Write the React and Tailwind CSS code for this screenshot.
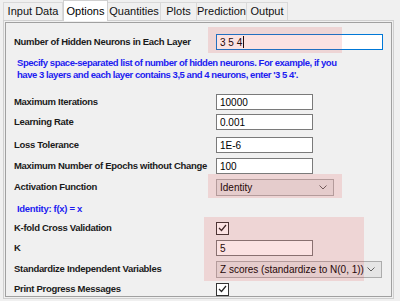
import React from "react";

const tabs = [
  { name: "Input Data", w: 60 },
  { name: "Options", w: 45, active: true },
  { name: "Quantities", w: 53 },
  { name: "Plots", w: 36 },
  { name: "Prediction", w: 50 },
  { name: "Output", w: 41 },
];

const TextBox = ({ value, focused, caret }) => (
  <div
    className={`h-[16px] bg-white border flex items-center px-[3px] text-[10px] font-normal text-black ${
      focused ? "border-[#0078d7] w-[167px]" : "border-[#7a7a7a] w-[97px]"
    }`}
  >
    {value}
    {caret && <span className="inline-block w-px h-[12px] bg-black ml-px"></span>}
  </div>
);

const Select = ({ value, width }) => (
  <div
    className={`h-[17px] bg-[#e5e5e5] border border-[#acacac] flex items-center justify-between pl-[3px] pr-[6px] text-[10px] font-normal text-black ${width}`}
  >
    <span>{value}</span>
    <svg width="8" height="5" viewBox="0 0 8 5">
      <path d="M0.5 0.5 L4 4 L7.5 0.5" fill="none" stroke="#606060" strokeWidth="1" />
    </svg>
  </div>
);

const Check = () => (
  <div className="w-[13px] h-[13px] bg-white border border-[#333] flex items-center justify-center">
    <svg width="9" height="8" viewBox="0 0 9 8">
      <path d="M1 4 L3.5 6.5 L8 1" fill="none" stroke="#222" strokeWidth="1.2" />
    </svg>
  </div>
);

const Row = ({ label, mt, h = "h-[16px]", children }) => (
  <div className={`flex items-center ${h} ${mt}`}>
    <div className="w-[202px] shrink-0 font-bold text-[9.5px] tracking-[-0.3px] text-[#1a1a1a] whitespace-nowrap">
      {label}
    </div>
    {children}
  </div>
);

export default function App() {
  return (
    <div
      className="relative w-[400px] h-[301px] bg-[#f0f0f0] overflow-hidden"
      style={{ fontFamily: '"Liberation Sans", Arial, sans-serif' }}
    >
      {/* tab strip */}
      <div className="flex items-end h-[21px] pl-[3px] relative z-10">
        {tabs.map((t) =>
          t.active ? (
            <div
              key={t.name}
              className="h-[21px] bg-white border border-b-0 border-[#d0d0d0] flex items-center justify-center text-[11px] text-black"
              style={{ width: t.w }}
            >
              {t.name}
            </div>
          ) : (
            <div
              key={t.name}
              className="h-[18px] mb-[1px] border border-b-0 border-l-0 first:border-l border-[#d9d9d9] flex items-center justify-center text-[11px] text-[#111]"
              style={{ width: t.w }}
            >
              {t.name}
            </div>
          )
        )}
      </div>

      {/* panel */}
      <div className="absolute left-[3px] top-[20px] w-[391px] h-[279px] border border-[#d0d0d0] bg-[#f0f0f0]">
        <div className="m-[1px] h-[275px] border border-[#a0a0a0] pl-[8px] pt-[11px]">
          <Row label="Number of Hidden Neurons in Each Layer">
            <TextBox value="3 5 4" focused caret />
          </Row>

          <div className="mt-[7px] pl-[3px] text-[9.5px] tracking-[-0.45px] leading-[12px] font-bold text-[#1c1cf0] whitespace-nowrap">
            <div>Specify space-separated list of number of hidden neurons. For example, if you</div>
            <div>have 3 layers and each layer contains 3,5 and 4 neurons, enter '3 5 4'.</div>
          </div>

          <Row label="Maximum Iterations" mt="mt-[13px]">
            <TextBox value="10000" />
          </Row>
          <Row label="Learning Rate" mt="mt-[4px]">
            <TextBox value="0.001" />
          </Row>
          <Row label="Loss Tolerance" mt="mt-[7px]">
            <TextBox value="1E-6" />
          </Row>
          <Row label="Maximum Number of Epochs without Change" mt="mt-[5px]">
            <TextBox value="100" />
          </Row>
          <Row label="Activation Function" mt="mt-[5px]">
            <Select value="Identity" width="w-[118px]" />
          </Row>

          <div className="mt-[8px] h-[12px] leading-[12px] pl-[3px] text-[9.5px] tracking-[-0.3px] font-bold text-[#1c1cf0]">
            Identity: f(x) = x
          </div>

          <Row label="K-fold Cross Validation" mt="mt-[5px]">
            <Check />
          </Row>
          <Row label="K" mt="mt-[4px]">
            <TextBox value="5" />
          </Row>
          <Row label="Standardize Independent Variables" mt="mt-[5px]" h="h-[17px]">
            <Select value="Z scores (standardize to N(0, 1))" width="w-[166px]" />
          </Row>
          <Row label="Print Progress Messages" mt="mt-[3px]">
            <Check />
          </Row>
        </div>
      </div>

      {/* highlight overlays */}
      <div className="absolute left-[208px] top-[27px] w-[134px] h-[26px] bg-[rgba(230,60,60,0.15)] pointer-events-none"></div>
      <div className="absolute left-[208px] top-[174px] w-[134px] h-[24px] bg-[rgba(230,60,60,0.15)] pointer-events-none"></div>
      <div className="absolute left-[204px] top-[217px] w-[160px] h-[64px] bg-[rgba(230,60,60,0.15)] pointer-events-none"></div>
    </div>
  );
}
